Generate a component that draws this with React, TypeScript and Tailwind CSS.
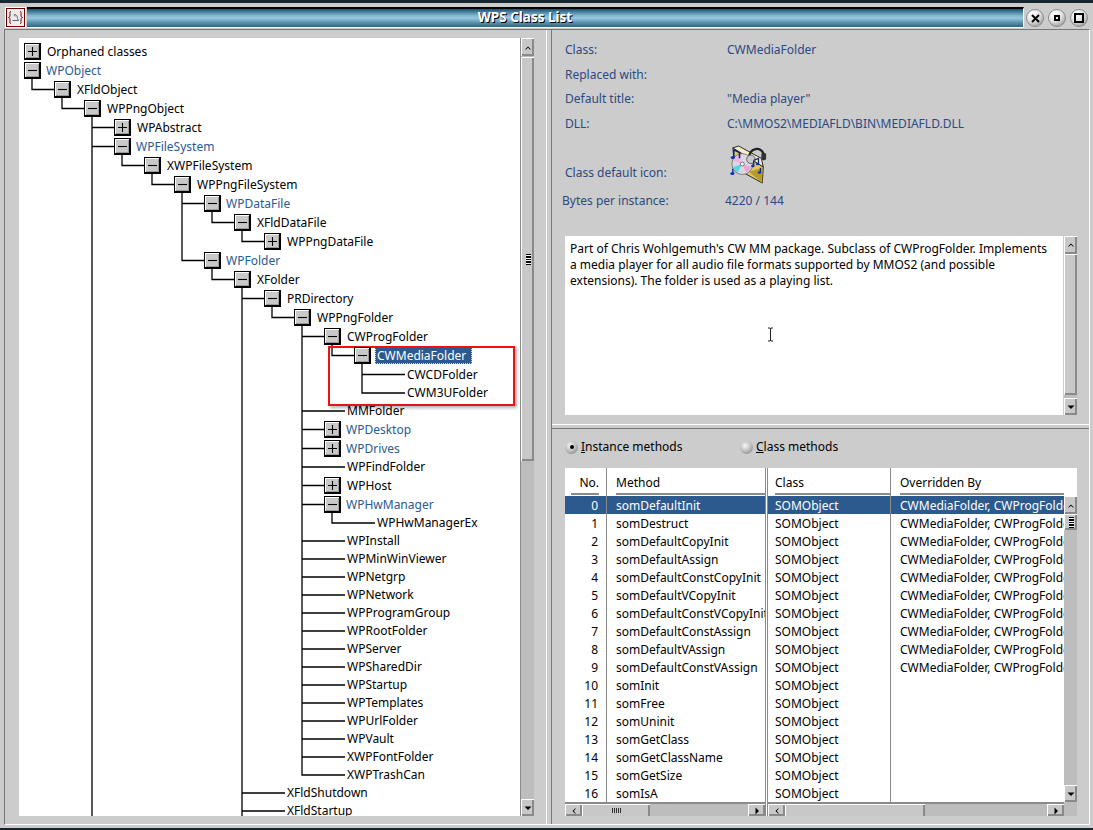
import React, { FC } from 'react';

type TreeRow = {
    name: string;
    level: number;
    box?: '+' | '-';
    blue?: boolean;
    selected?: boolean;
};

const treeRows: TreeRow[] = [
    { name: 'Orphaned classes', level: 0, box: '+' },
    { name: 'WPObject', level: 0, box: '-', blue: true },
    { name: 'XFldObject', level: 1, box: '-' },
    { name: 'WPPngObject', level: 2, box: '-' },
    { name: 'WPAbstract', level: 3, box: '+' },
    { name: 'WPFileSystem', level: 3, box: '-', blue: true },
    { name: 'XWPFileSystem', level: 4, box: '-' },
    { name: 'WPPngFileSystem', level: 5, box: '-' },
    { name: 'WPDataFile', level: 6, box: '-', blue: true },
    { name: 'XFldDataFile', level: 7, box: '-' },
    { name: 'WPPngDataFile', level: 8, box: '+' },
    { name: 'WPFolder', level: 6, box: '-', blue: true },
    { name: 'XFolder', level: 7, box: '-' },
    { name: 'PRDirectory', level: 8, box: '-' },
    { name: 'WPPngFolder', level: 9, box: '-' },
    { name: 'CWProgFolder', level: 10, box: '-' },
    { name: 'CWMediaFolder', level: 11, box: '-', selected: true },
    { name: 'CWCDFolder', level: 12 },
    { name: 'CWM3UFolder', level: 12 },
    { name: 'MMFolder', level: 10 },
    { name: 'WPDesktop', level: 10, box: '+', blue: true },
    { name: 'WPDrives', level: 10, box: '+', blue: true },
    { name: 'WPFindFolder', level: 10 },
    { name: 'WPHost', level: 10, box: '+' },
    { name: 'WPHwManager', level: 10, box: '-', blue: true },
    { name: 'WPHwManagerEx', level: 11 },
    { name: 'WPInstall', level: 10 },
    { name: 'WPMinWinViewer', level: 10 },
    { name: 'WPNetgrp', level: 10 },
    { name: 'WPNetwork', level: 10 },
    { name: 'WPProgramGroup', level: 10 },
    { name: 'WPRootFolder', level: 10 },
    { name: 'WPServer', level: 10 },
    { name: 'WPSharedDir', level: 10 },
    { name: 'WPStartup', level: 10 },
    { name: 'WPTemplates', level: 10 },
    { name: 'WPUrlFolder', level: 10 },
    { name: 'WPVault', level: 10 },
    { name: 'XWPFontFolder', level: 10 },
    { name: 'XWPTrashCan', level: 10 },
    { name: 'XFldShutdown', level: 8 },
    { name: 'XFldStartup', level: 8 },
];

const methods = [
    'somDefaultInit',
    'somDestruct',
    'somDefaultCopyInit',
    'somDefaultAssign',
    'somDefaultConstCopyInit',
    'somDefaultVCopyInit',
    'somDefaultConstVCopyInit',
    'somDefaultConstAssign',
    'somDefaultVAssign',
    'somDefaultConstVAssign',
    'somInit',
    'somFree',
    'somUninit',
    'somGetClass',
    'somGetClassName',
    'somGetSize',
    'somIsA',
];

const infoRows = [
    ['Class:', 'CWMediaFolder'],
    ['Replaced with:', ''],
    ['Default title:', '"Media player"'],
    ['DLL:', 'C:\\MMOS2\\MEDIAFLD\\BIN\\MEDIAFLD.DLL'],
];

// row pitch in the capture is not even, 19px for these and 18px for the rest
const isTall = (i: number) => i < 18 || i === 20 || i === 21 || i === 23 || i === 24;
const rowHeight = (i: number) => (isTall(i) ? 19 : 18);

const centerX = (level: number) => 13 + 30 * level;

const TreeLines: FC = () => {
    let y = 4;
    const mids = treeRows.map((_, i) => {
        const mid = y + rowHeight(i) / 2;
        y += rowHeight(i);
        return mid;
    });

    const segments = treeRows.map((row, i) => {
        if (row.level === 0) return '';
        let p = i - 1;
        while (treeRows[p].level !== row.level - 1) p--;
        const x = centerX(row.level - 1);
        const end = row.box ? centerX(row.level) : centerX(row.level) + 13;
        return `M${x} ${mids[p]}V${mids[i]}H${end}`;
    });
    // branches that carry on below the fold
    const pngObjectMid = mids[3];
    const xFolderMid = mids[12];
    segments.push(`M${centerX(2)} ${pngObjectMid}V830M${centerX(7)} ${xFolderMid}V830`);

    return (
        <svg className="absolute left-0 top-0" width={501} height={830} fill="none">
            <path d={segments.join('')} stroke="#000" strokeWidth={1.3} />
        </svg>
    );
};

const Expander: FC<{ sign: '+' | '-' }> = ({ sign }) => (
    <span className="relative z-10 flex h-[17px] w-[17px] shrink-0 items-center justify-center border border-black border-r-2 border-b-2 bg-[#c9c9c9] shadow-[inset_1px_1px_0_#fff,inset_-1px_-1px_0_#9a9a9a]">
        <svg width="11" height="11" viewBox="0 0 11 11">
            <path d={sign === '+' ? 'M1 5.5H10M5.5 1V10' : 'M1 5.5H10'} stroke="#000" strokeWidth="1.1" />
        </svg>
    </span>
);

const Tree: FC = () => (
    <div className="relative h-full w-[501px] overflow-hidden bg-white pt-[4px]">
        <TreeLines />
        {treeRows.map((row, i) => (
            <div
                key={row.name}
                className={`relative flex items-center ${isTall(i) ? 'h-[19px]' : 'h-[18px]'}`}
                style={{ paddingLeft: row.box ? 5 + 30 * row.level : 28 + 30 * row.level }}
            >
                {row.box && <Expander sign={row.box} />}
                {row.selected ? (
                    <span className="ml-[4px] flex h-[17px] items-center whitespace-nowrap bg-[#2c5a8f] pl-[2px] pr-[6px] text-white outline-1 -outline-offset-1 outline-dotted outline-[#c9d6e6]">
                        {row.name}
                    </span>
                ) : (
                    <span
                        className={`whitespace-nowrap ${row.box ? (row.blue ? 'ml-[5px]' : 'ml-[6px]') : ''} ${row.blue ? 'text-[#2a5a94]' : 'text-black'}`}
                    >
                        {row.name}
                    </span>
                )}
            </div>
        ))}
    </div>
);

const Arrow: FC<{ dir: 'up' | 'down' | 'left' | 'right' }> = ({ dir }) => {
    const d = {
        up: 'M2 6.5 L5 3.5 L8 6.5 L7 6.5 L5 4.8 L3 6.5Z',
        down: 'M1.5 3.5 H8.5 L5 7Z',
        left: 'M6.5 2 L3.5 5 L6.5 8 L6.5 7 L4.8 5 L6.5 3Z',
        right: 'M3.5 1.5 L7 5 L3.5 8.5Z',
    }[dir];
    return (
        <svg width={10} height={10} viewBox="0 0 10 10">
            <path d={d} fill="#000" />
        </svg>
    );
};

const ScrollButton: FC<{ dir: 'up' | 'down' | 'left' | 'right'; className: string }> = ({ dir, className }) => (
    <div
        className={`flex shrink-0 items-center justify-center border-t border-l border-white bg-[#c8c8c8] shadow-[inset_-2px_-2px_0_#8a8a8a] ${className}`}
    >
        <Arrow dir={dir} />
    </div>
);

const Grip: FC<{ vertical?: boolean }> = ({ vertical }) => (
    <div className={`flex ${vertical ? 'flex-col gap-[1px] bg-white' : 'gap-[1px]'}`}>
        {Array.from({ length: 5 }).map((_, i) => (
            <span key={i} className={vertical ? 'h-[1.5px] w-[5px] bg-black' : 'h-[5px] w-[1px] bg-[#333]'} />
        ))}
    </div>
);

const VScroll: FC<{ thumbTop: number; thumbHeight: number; grip?: boolean }> = ({ thumbTop, thumbHeight, grip }) => (
    <div className="flex h-full w-[13px] shrink-0 flex-col bg-[#bdbdbd]">
        <ScrollButton dir="up" className="h-[18px] w-[13px]" />
        <div className="relative min-h-0 flex-1">
            <div
                className="absolute left-0 flex w-[13px] items-center justify-center border-l border-t border-white bg-[#c8c8c8] shadow-[inset_-2px_-2px_0_#8a8a8a]"
                style={{ top: thumbTop, height: thumbHeight }}
            >
                {grip && <Grip vertical />}
            </div>
        </div>
        <ScrollButton dir="down" className="h-[17px] w-[13px]" />
    </div>
);

const HScroll: FC<{ thumb: number; grip?: boolean; className: string }> = ({ thumb, grip, className }) => (
    <div className={`flex h-[14px] items-stretch border-t-2 border-[#8a8a8a] bg-[#bdbdbd] ${className}`}>
        <ScrollButton dir="left" className="w-[17px]" />
        <div className="min-w-0 flex-1">
            <div
                className="flex h-full items-center justify-center border-l border-t border-white bg-[#c8c8c8] shadow-[inset_-2px_0_0_#8a8a8a]"
                style={{ width: thumb }}
            >
                {grip && <Grip />}
            </div>
        </div>
        <ScrollButton dir="right" className="w-[17px]" />
    </div>
);

const WinButton: FC<{ children: React.ReactNode }> = ({ children }) => (
    <div className="flex h-[18px] w-[18px] items-center justify-center rounded-full border border-[#8c8c8c] bg-[radial-gradient(circle_at_35%_25%,#ffffff_0%,#e4e4e4_45%,#9a9a9a_85%,#c8c8c8_100%)]">
        {children}
    </div>
);

const Radio: FC<{ checked?: boolean }> = ({ checked }) => (
    <span className="flex h-[13px] w-[13px] items-center justify-center rounded-full bg-[radial-gradient(circle_at_40%_35%,#f6f6f6_0%,#bcbcbc_50%,#6e6e6e_100%)]">
        {checked && <span className="h-[4px] w-[4px] rounded-full bg-black" />}
    </span>
);

const SystemIcon: FC = () => (
    <div className="flex h-[21px] w-[21px] items-center justify-center border border-white bg-[#ececec] shadow-[inset_0_0_0_1px_#6b0000]">
        <svg width="17" height="17" viewBox="0 0 17 17" fill="none">
            <path d="M4 2.5C2.5 2.5 3 4 3 6S2.5 8 1.5 8.5C2.5 9 3 9 3 11S2.5 14.5 4 14.5" stroke="#800000" strokeWidth="1" />
            <path d="M13 2.5C14.5 2.5 14 4 14 6S14.5 8 15.5 8.5C14.5 9 14 9 14 11S14.5 14.5 13 14.5" stroke="#800000" strokeWidth="1" />
            <path d="M5.5 11.5H11.5L10.5 9.5C10.5 7.5 9.5 5.5 8 5.5S7 7 8.5 7" stroke="#666" strokeWidth="1" />
        </svg>
    </div>
);

const FolderIcon: FC = () => (
    <svg width="38" height="40" viewBox="0 0 40 42">
        <path d="M3 3 L35 23 L34 40 L5 24Z" fill="#e0c860" stroke="#222" strokeWidth="1" />
        <path d="M20 28 L34 24 L34 40Z" fill="#b79a2c" />
        <path d="M3 3 L9 1 L33 14 L35 23Z" fill="#f3eec8" stroke="#222" strokeWidth="1" />
        <circle cx="13" cy="20" r="11" fill="#d8d8e4" stroke="#555" strokeWidth="0.7" />
        <path d="M13 20 L4 17 A10 10 0 0 1 10 10Z" fill="#f0b8e0" />
        <path d="M13 20 L8 29 A10 10 0 0 1 3.5 23Z" fill="#50d8e8" />
        <path d="M13 20 L22 23 A10 10 0 0 1 17 29Z" fill="#f0a0d8" />
        <circle cx="13" cy="20" r="2" fill="#fff" stroke="#444" strokeWidth="0.7" />
        <path d="M20 14 C20 3 33 1 35 9 L36 15" fill="none" stroke="#222" strokeWidth="2.4" />
        <circle cx="22" cy="15" r="4.5" fill="#c8c8c8" stroke="#444" strokeWidth="0.8" />
        <rect x="33" y="8" width="5" height="8" rx="2" fill="#333" />
        <path d="M4 5 V13 M4 5 L10 8 V14" stroke="#102080" strokeWidth="1.6" fill="none" />
        <ellipse cx="3" cy="13" rx="2.2" ry="1.6" fill="#1030c0" />
        <path d="M3 25 V30" stroke="#102080" strokeWidth="1.4" />
        <ellipse cx="2.5" cy="30" rx="2.2" ry="1.6" fill="#1030c0" />
        <path d="M25 16 V22 M25 16 L30 14 V20" stroke="#102080" strokeWidth="1.3" fill="none" />
        <ellipse cx="24" cy="22" rx="1.8" ry="1.3" fill="#1030c0" />
        <ellipse cx="29" cy="20" rx="1.8" ry="1.3" fill="#1030c0" />
        <path d="M32 24 V29" stroke="#102080" strokeWidth="1.3" />
        <ellipse cx="31" cy="29" rx="1.8" ry="1.3" fill="#1030c0" />
    </svg>
);

const MethodTable: FC = () => (
    <div className="relative h-[348px] w-[512px] bg-white">
        <div className="flex h-full">
            {/* number and method column */}
            <div className="flex w-[200px] flex-col">
                <div className="min-h-0 flex-1 overflow-hidden">
                    <div className="flex h-[28px]">
                        <div className="w-[42px] border-r border-[#8a8a8a] pl-[6px] pr-[7px]">
                            <div className="h-[27px] border-b-2 border-[#8a8a8a] pt-[9px] text-right">No.</div>
                        </div>
                        <div className="flex-1 pl-[9px]">
                            <div className="h-[27px] border-b-2 border-[#8a8a8a] pt-[9px]">Method</div>
                        </div>
                    </div>
                    {methods.map((m, i) => (
                        <div key={m} className={`flex h-[18px] ${i === 0 ? 'bg-[#2c5a8f] text-white' : ''}`}>
                            <div className="flex w-[42px] items-center justify-end border-r border-[#8a8a8a] pr-[8px] pt-[1px]">{i}</div>
                            <div className="flex flex-1 items-center overflow-hidden whitespace-nowrap pl-[9px] pt-[1px]">{m}</div>
                        </div>
                    ))}
                </div>
                <HScroll thumb={68} grip className="w-[200px]" />
            </div>
            <div className="w-[3px] border-x border-[#8a8a8a] bg-white" />
            {/* class and overridden column */}
            <div className="flex min-w-0 flex-1 flex-col">
                <div className="flex min-h-0 flex-1">
                    <div className="min-h-0 min-w-0 flex-1 overflow-hidden">
                        <div className="flex h-[28px]">
                            <div className="w-[123px] border-r border-[#8a8a8a] pl-[7px]">
                                <div className="h-[27px] border-b-2 border-[#8a8a8a] pt-[9px]">Class</div>
                            </div>
                            <div className="flex-1 pl-[9px]">
                                <div className="h-[27px] border-b-2 border-[#8a8a8a] pt-[9px]">Overridden By</div>
                            </div>
                        </div>
                        {methods.map((m, i) => (
                            <div key={m} className={`flex h-[18px] ${i === 0 ? 'bg-[#2c5a8f] text-white' : ''}`}>
                                <div className="flex w-[123px] items-center border-r border-[#8a8a8a] pl-[7px] pt-[1px]">SOMObject</div>
                                <div className="flex flex-1 items-center overflow-hidden whitespace-nowrap pl-[9px] pt-[1px]">
                                    {i < 10 ? 'CWMediaFolder, CWProgFolder' : ''}
                                </div>
                            </div>
                        ))}
                    </div>
                    <div className="flex h-full flex-col pt-[28px]">
                        <VScroll thumbTop={0} thumbHeight={16} grip />
                    </div>
                </div>
                <div className="flex">
                    <HScroll thumb={140} className="min-w-0 flex-1" />
                    <div className="h-[14px] w-[13px] bg-[#bdbdbd]" />
                </div>
            </div>
        </div>
    </div>
);

export default function App() {
    return (
        <div
            className="relative flex h-[830px] w-[1093px] flex-col overflow-hidden bg-[#cccccc] text-[12px] leading-none text-black"
            style={{ fontFamily: '"Noto Sans", "Liberation Sans", sans-serif' }}
        >
            <div className="h-[3px] shrink-0 bg-[#16262e]" />
            {/* title row */}
            <div className="flex h-[26px] shrink-0 items-end pb-[1px] pl-[5px]">
                <SystemIcon />
                <div className="ml-[1px] flex h-[21px] w-[997px] items-center justify-center border-t-2 border-r border-b border-t-black border-r-white border-b-white bg-[linear-gradient(to_bottom,#1f4f6e_0%,#7db3cf_35%,#9cc8dc_50%,#5a93b2_75%,#2c6685_100%)]">
                    <span className="text-[13.5px] font-bold text-white [text-shadow:1px_1px_0_#000]">WPS Class List</span>
                </div>
                <div className="ml-[2px] flex gap-[4px] pb-[1px]">
                    <WinButton>
                        <svg width="9" height="9" viewBox="0 0 9 9">
                            <path d="M1 1L8 8M8 1L1 8" stroke="#000" strokeWidth="2" />
                        </svg>
                    </WinButton>
                    <WinButton>
                        <span className="h-[6px] w-[6px] border-2 border-black" />
                    </WinButton>
                    <WinButton>
                        <span className="h-[10px] w-[10px] border-2 border-black" />
                    </WinButton>
                </div>
            </div>
            {/* client area */}
            <div className="flex min-h-0 flex-1 pb-[3px] pl-[4px] pr-[3px]">
                <div className="flex min-w-0 flex-1 border border-t-[#777] border-l-[#777] border-b-white border-r-white pl-[14px] pt-[8px]">
                    {/* left pane */}
                    <div className="flex h-[778px] w-[515px] shrink-0 overflow-hidden">
                        <Tree />
                        <div className="w-[1px] bg-[#8a8a8a]" />
                        <VScroll thumbTop={1} thumbHeight={404} grip />
                    </div>
                    {/* splitter */}
                    <div className="-mt-[8px] ml-[12px] w-[1px] bg-white" />
                    <div className="-mt-[8px] ml-[4px] w-[1px] bg-[#777]" />
                    {/* right pane */}
                    <div className="-mt-[8px] flex min-w-0 flex-1 flex-col">
                        <div className="h-[394px] shrink-0 pl-[13px]">
                            <div className="flex flex-col gap-[10.5px] pt-[13px] text-[#2b4a82]">
                                {infoRows.map(([label, value]) => (
                                    <div key={label} className="flex h-[14px] items-center">
                                        <span className="w-[162px]">{label}</span>
                                        <span>{value}</span>
                                    </div>
                                ))}
                            </div>
                            <div className="mt-[14px] flex h-[40px] items-end text-[#2b4a82]">
                                <span className="w-[165px] pb-[6px]">Class default icon:</span>
                                <FolderIcon />
                            </div>
                            <div className="-ml-[3px] mt-[9px] flex h-[14px] items-center text-[#2b4a82]">
                                <span className="w-[163px]">Bytes per instance:</span>
                                <span>4220 / 144</span>
                            </div>
                            <div className="mt-[28px] flex h-[179px] w-[512px]">
                                <div className="relative w-[498px] whitespace-pre-line bg-white px-[5px] pt-[5px] leading-[16px]">
                                    {
                                        "Part of Chris Wohlgemuth's CW MM package. Subclass of CWProgFolder. Implements\na media player for all audio file formats supported by MMOS2 (and possible\nextensions). The folder is used as a playing list."
                                    }
                                    {/* text cursor from the capture */}
                                    <svg className="absolute left-[202px] top-[91px]" width="7" height="15" viewBox="0 0 7 15">
                                        <path d="M1 1H3L3.5 2L4 1H6M3.5 2V13M1 14H3L3.5 13L4 14H6" stroke="#222" fill="none" />
                                    </svg>
                                </div>
                                <div className="ml-[1px]">
                                    <VScroll thumbTop={0} thumbHeight={141} />
                                </div>
                            </div>
                        </div>
                        {/* horizontal splitter */}
                        <div className="h-[5px] shrink-0 border-t border-b border-t-white border-b-[#777]" />
                        <div className="flex min-h-0 flex-1 flex-col pl-[13px]">
                            <div className="flex h-[39px] shrink-0 items-center pb-[3px]">
                                <span className="flex w-[175px] items-center gap-[3px]">
                                    <Radio checked />
                                    <span>
                                        <u>I</u>nstance methods
                                    </span>
                                </span>
                                <span className="flex items-center gap-[3px]">
                                    <Radio />
                                    <span>
                                        <u>C</u>lass methods
                                    </span>
                                </span>
                            </div>
                            <MethodTable />
                        </div>
                    </div>
                </div>
            </div>
            <div className="h-[2px] shrink-0 bg-[#16262e]" />
            {/* red highlight drawn over the tree */}
            <div className="absolute left-[328px] top-[346px] h-[60px] w-[187px] border-2 border-[#ee1111] shadow-[2px_2px_3px_rgba(0,0,0,0.3)]" />
        </div>
    );
}
